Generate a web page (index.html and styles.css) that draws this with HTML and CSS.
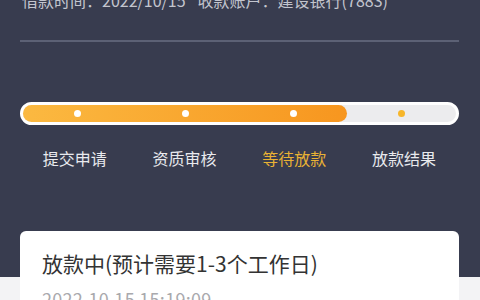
FILE: index.html
```html
<!DOCTYPE html>
<html lang="zh-CN">
<head>
<meta charset="utf-8">
<link rel="stylesheet" href="styles.css">
</head>
<body>
<div class="page">
  <div class="info">借款时间：2022/10/15<span class="gap"></span>收款账户：建设银行(7883)</div>
  <div class="divider"></div>
  <div class="bar">
    <div class="fill" style="width: 74.8%"></div>
    <div class="dots">
      <span class="dot"></span>
      <span class="dot"></span>
      <span class="dot"></span>
      <span class="dot dot-todo"></span>
    </div>
  </div>
  <div class="steps">
    <div class="step">提交申请</div>
    <div class="step">资质审核</div>
    <div class="step step-active">等待放款</div>
    <div class="step">放款结果</div>
  </div>
  <div class="card">
    <div class="card-title">放款中(预计需要1-3个工作日)</div>
    <div class="card-time">2022.10.15 15:19:09</div>
  </div>
</div>
</body>
</html>
```
FILE: styles.css
```css
* { box-sizing: border-box; }
html, body { margin: 0; padding: 0; }
body {
  width: 480px;
  height: 300px;
  overflow: hidden;
  font-family: "Noto Sans CJK SC", "Noto Sans", sans-serif;
}
.page {
  height: 300px;
  overflow: hidden;
  padding: 0 21px 0 20px;
  background: linear-gradient(#383c4f 0, #383c4f 277px, #f3f3f5 277px);
}
.info {
  margin-top: -11px;
  padding-left: 2px;
  font-size: 16px;
  line-height: 22px;
  color: #c3c5ce;
  white-space: nowrap;
}
.gap {
  display: inline-block;
  width: 12px;
}
.divider {
  margin-top: 29px;
  height: 1.5px;
  background: #5c6175;
}
.bar {
  position: relative;
  margin-top: 60px;
  height: 23px;
  border: 3px solid #ffffff;
  border-radius: 12px;
  background: #ececee;
}
.fill {
  height: 100%;
  border-radius: 9px;
  background: linear-gradient(90deg, #fbb941, #f7961f);
}
.dots {
  position: absolute;
  inset: 0;
  display: flex;
}
.dot {
  flex: 1;
  position: relative;
}
.dot::after {
  content: "";
  position: absolute;
  left: 50%;
  top: 50%;
  width: 7px;
  height: 7px;
  margin: -3.5px 0 0 -3.5px;
  border-radius: 50%;
  background: #ffffff;
}
.dot-todo::after { background: #f7b62a; }
.steps {
  display: flex;
  margin-top: 22px;
}
.step {
  flex: 1;
  text-align: center;
  font-size: 16px;
  line-height: 22px;
  color: #e9eaee;
}
.step-active { color: #e8b234; }
.card {
  margin-top: 62px;
  padding: 17px 22px 0;
  height: 120px;
  background: #ffffff;
  border-radius: 6px;
}
.card-title {
  font-size: 21px;
  line-height: 30px;
  color: #333333;
  white-space: nowrap;
}
.card-time {
  margin-top: 9px;
  font-size: 18px;
  line-height: 24px;
  color: #a9a9ad;
  letter-spacing: 0.3px;
}
```
